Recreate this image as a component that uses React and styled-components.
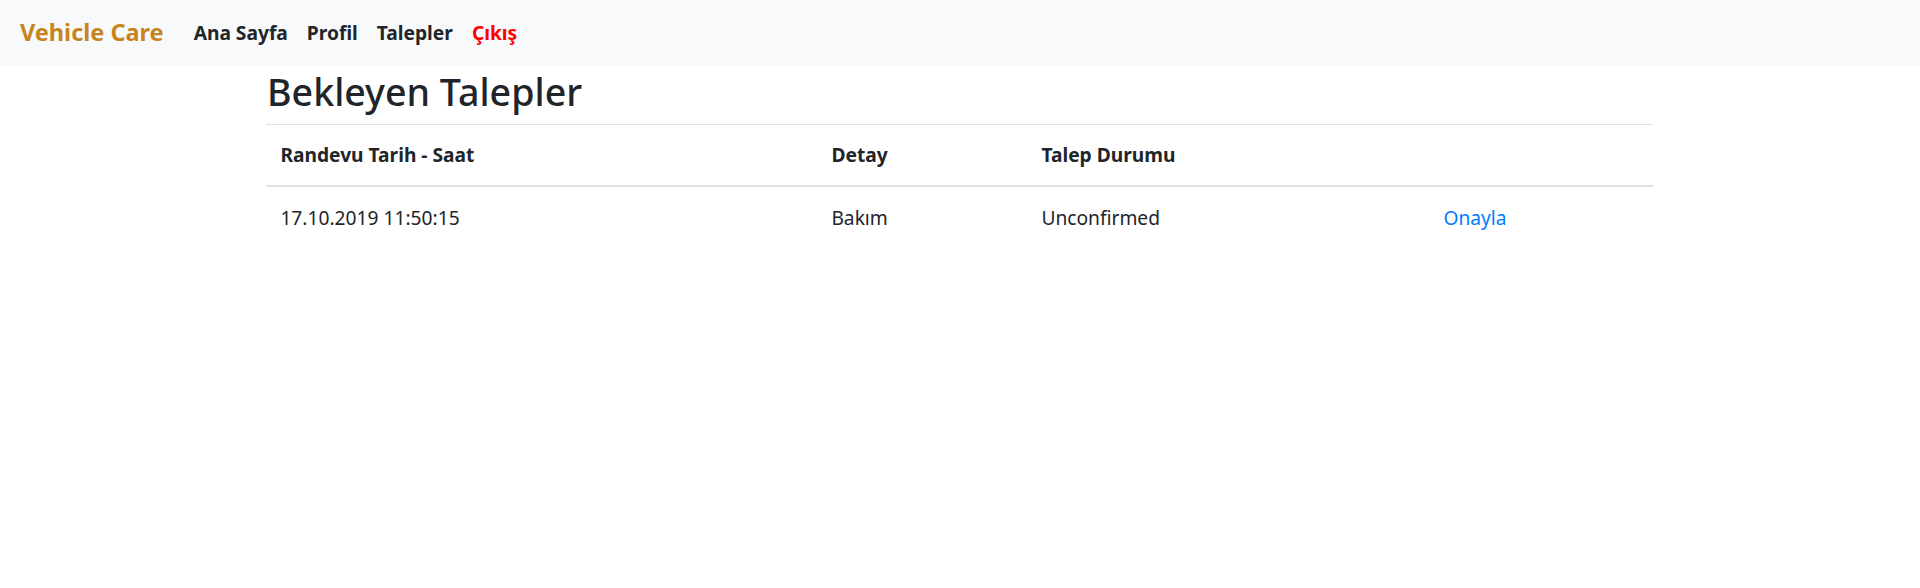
import styled, { createGlobalStyle } from "styled-components"

const GlobalStyle = createGlobalStyle`
    html, body {
        margin: 0;
        padding: 0;
        background: #fff;
    }
    body {
        font-family: "Segoe UI", "Noto Sans", "Open Sans", sans-serif;
        font-size: 19.2px;
        line-height: 1.5;
        color: #212529;
    }
`

const Nav = styled.nav`
    display: flex;
    align-items: center;
    height: 66px;
    padding: 0 20px;
    background: #f8f9fa;
    box-sizing: border-box;
`

const Brand = styled.a`
    font-size: 23.5px;
    font-weight: 700;
    color: #c8841c;
    margin-right: 30px;
    text-decoration: none;
`

const NavLinks = styled.div`
    display: flex;
    gap: 19px;
`

const NavLink = styled.a`
    font-weight: 700;
    text-decoration: none;
    color: ${(p) => (p.$danger ? "#ff0000" : "#212529")};
`

const Main = styled.main`
    margin: 0 267px 0 266px;
    padding-top: 3px;
`

const Title = styled.h2`
    font-size: 37.6px;
    font-weight: 500;
    line-height: 1.22;
    margin: 0 0 9px 1px;
`

const Table = styled.table`
    width: 100%;
    border-collapse: collapse;
    table-layout: fixed;
`

const Th = styled.th`
    box-sizing: border-box;
    text-align: left;
    font-weight: 700;
    padding: 16px 14.4px 15.5px;
    border-top: 1.2px solid #dee2e6;
    border-bottom: 2.4px solid #dee2e6;
    width: ${(p) => p.$w || "auto"};
`

const Td = styled.td`
    padding: 17px 14.4px 14px;
    vertical-align: top;
`

const Action = styled.a`
    color: #007bff;
    text-decoration: none;
`

const rows = [
    { date: "17.10.2019 11:50:15", detail: "Bakım", status: "Unconfirmed" },
]

const App = () => {
    return (
        <>
            <GlobalStyle />
            <Nav>
                <Brand href="#">Vehicle Care</Brand>
                <NavLinks>
                    <NavLink href="#">Ana Sayfa</NavLink>
                    <NavLink href="#">Profil</NavLink>
                    <NavLink href="#">Talepler</NavLink>
                    <NavLink href="#" $danger>Çıkış</NavLink>
                </NavLinks>
            </Nav>
            <Main>
                <Title>Bekleyen Talepler</Title>
                <Table>
                    <thead>
                        <tr>
                            <Th $w="551px">Randevu Tarih - Saat</Th>
                            <Th $w="210px">Detay</Th>
                            <Th $w="402px">Talep Durumu</Th>
                            <Th></Th>
                        </tr>
                    </thead>
                    <tbody>
                        {rows.map((r) => (
                            <tr key={r.date}>
                                <Td>{r.date}</Td>
                                <Td>{r.detail}</Td>
                                <Td>{r.status}</Td>
                                <Td><Action href="#">Onayla</Action></Td>
                            </tr>
                        ))}
                    </tbody>
                </Table>
            </Main>
        </>
    )
}

export default App
